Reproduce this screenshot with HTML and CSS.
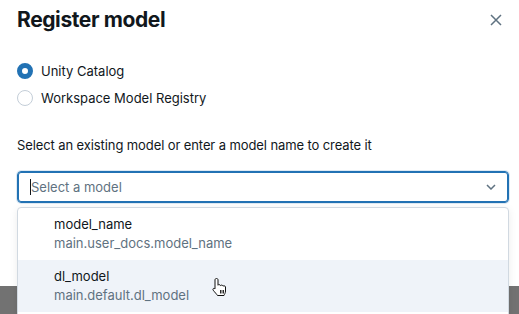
FILE: index.html
```html
<!DOCTYPE html>
<html lang="en">
  <head>
    <meta charset="UTF-8" />
    <title>Register model</title>
    <link rel="stylesheet" href="styles.css">
  </head>
  <body>
    <div class="modal">
      <div class="header">
        <h2>Register model</h2>
        <button class="close" aria-label="Close">
          <svg width="12" height="12" viewBox="0 0 12 12">
            <path d="M1 1 L11 11 M11 1 L1 11" stroke="#5f7281" stroke-width="1.5" fill="none" />
          </svg>
        </button>
      </div>

      <div class="radios">
        <label class="radio">
          <span class="dot checked"></span>
          <span>Unity Catalog</span>
        </label>
        <label class="radio">
          <span class="dot"></span>
          <span>Workspace Model Registry</span>
        </label>
      </div>

      <p class="hint">Select an existing model or enter a model name to create it</p>

      <div class="field">
        <span class="caret"></span>
        <span class="placeholder">Select a model</span>
        <svg class="chevron" width="10" height="6" viewBox="0 0 10 6">
          <path d="M1 1 L5 5 L9 1" stroke="#5f7281" stroke-width="1.5" fill="none" />
        </svg>
      </div>

      <ul class="menu">
        <li class="option">
          <div class="name">model_name</div>
          <div class="path">main.user_docs.model_name</div>
        </li>
        <li class="option hover">
          <div class="name">dl_model</div>
          <div class="path">main.default.dl_model</div>
          <svg class="pointer" width="17" height="20" viewBox="0 0 17 20">
            <path d="M5.5 1.5 C6.5 1.5 7 2 7 3 L7 8.2 C7.2 7.4 9.3 7.4 9.5 8.6 C9.8 7.8 11.8 7.9 12 9.2 C12.4 8.5 14.3 8.6 14.5 10 L14.5 14 C14.5 16 13.5 17 13 18.5 L6.5 18.5 C5.5 17 4 15.5 2.2 13.2 C1.4 12.2 2.4 10.9 3.6 11.6 L4 11.9 L4 3 C4 2 4.5 1.5 5.5 1.5 Z" fill="#fff" stroke="#111" stroke-width="1" stroke-linejoin="round" />
            <path d="M9.5 13 V16.5 M11 13 V16.5 M12.5 13 V16.5" stroke="#111" stroke-width="0.9" />
          </svg>
        </li>
        <li class="option empty"></li>
      </ul>
    </div>
    <div class="backdrop"></div>
  </body>
</html>
```

FILE: styles.css
```css
body {
  font-family: Inter, "Noto Sans", sans-serif;
  margin: 0;
  background: #fff;
  color: #11171c;
  overflow: hidden;
}

.modal {
  position: relative;
  height: 286px;
  padding: 0 10px 0 17px;
  background: #fff;
  box-sizing: border-box;
}

.backdrop {
  height: 40px;
  background: #727272;
}

.header {
  display: flex;
  justify-content: space-between;
  align-items: flex-start;
  padding-top: 6px;
}

.header h2 {
  margin: 0;
  font-size: 21px;
  line-height: 28px;
  font-weight: 700;
  letter-spacing: -0.4px;
}

.close {
  border: none;
  background: none;
  padding: 0;
  margin: 4px 3px 0 0;
  width: 20px;
  height: 20px;
  display: flex;
  align-items: center;
  justify-content: center;
}

.radios {
  display: flex;
  flex-direction: column;
  gap: 11px;
  margin-top: 29px;
}

.radio {
  display: flex;
  align-items: center;
  gap: 8px;
  font-size: 13px;
  line-height: 16px;
}

.dot {
  width: 16px;
  height: 16px;
  box-sizing: border-box;
  border-radius: 50%;
  border: 1px solid #c4ced8;
  background: #fff;
}

.dot.checked {
  border: 5px solid #2272b4;
  background: #fff;
}

.hint {
  margin: 31px 0 0;
  font-size: 13px;
  line-height: 16px;
  letter-spacing: -0.1px;
}

.field {
  display: flex;
  align-items: center;
  margin: 18px 0 0;
  width: 492px;
  height: 32px;
  box-sizing: border-box;
  border: 1px solid #2272b4;
  box-shadow: inset 0 0 0 1px #2272b4, 0 0 0 1px rgba(34, 114, 180, 0.15);
  border-radius: 4px;
  padding: 0 12px;
  font-size: 13px;
}

.caret {
  width: 1px;
  height: 16px;
  background: #11171c;
}

.placeholder {
  color: #5f7281;
  flex: 1;
}

.menu {
  position: absolute;
  left: 17px;
  top: 207px;
  width: 492px;
  box-sizing: border-box;
  margin: 0;
  padding: 0;
  list-style: none;
  border: 1px solid #d1d9e1;
  border-radius: 4px;
  background: #fff;
  box-shadow: 0 2px 8px rgba(0, 0, 0, 0.08);
  overflow: hidden;
}

.option {
  position: relative;
  height: 52px;
  padding: 7px 36px;
  box-sizing: border-box;
  font-size: 13px;
}

.option.empty {
  height: 20px;
}

.option.hover {
  background: #eff3f9;
}

.name {
  line-height: 18px;
}

.path {
  color: #5f7281;
  line-height: 18px;
  margin-top: 1px;
}

.pointer {
  position: absolute;
  left: 193px;
  top: 17px;
}
```
